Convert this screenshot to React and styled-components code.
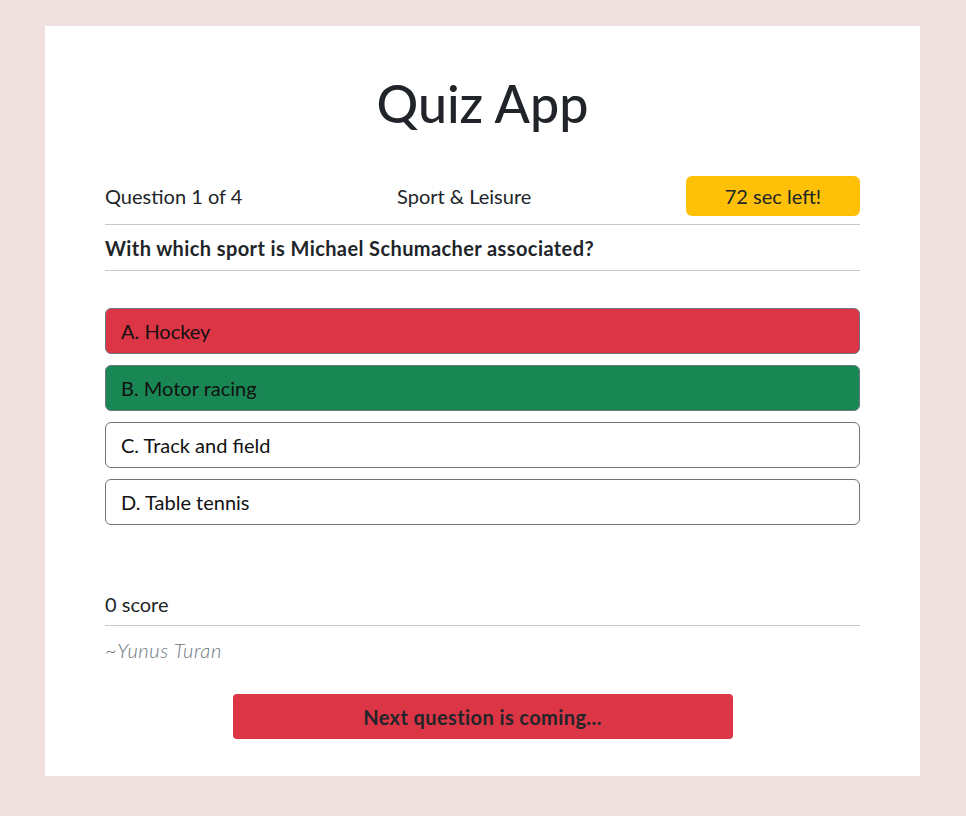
import React from 'react';
import styled, { createGlobalStyle } from 'styled-components';

const GlobalStyle = createGlobalStyle`
  body {
    margin: 0;
    background: #f1e0e0;
    font-family: 'Lato', 'Noto Sans', Arial, sans-serif;
    color: #212529;
  }
`;

const Page = styled.div`
  min-height: 100vh;
  padding: 26px 46px 40px 45px;
  box-sizing: border-box;
`;

const Card = styled.div`
  background: #fff;
  width: 875px;
  min-height: 750px;
  box-sizing: border-box;
  padding: 0 60px 37px 60px;
  display: flex;
  flex-direction: column;
`;

const Title = styled.h1`
  margin: 46px 0 42px 0;
  text-align: center;
  font-size: 52px;
  font-weight: 500;
  line-height: 1.2;
  color: #212529;
`;

const InfoRow = styled.div`
  display: flex;
  justify-content: space-between;
  align-items: center;
  font-size: 20px;
  font-weight: 400;
  color: #212529;
`;

const Timer = styled.div`
  width: 174px;
  height: 40px;
  border-radius: 6px;
  background: #ffc107;
  display: flex;
  align-items: center;
  justify-content: center;
`;

const Rule = styled.hr`
  border: none;
  border-top: 1px solid #c8c8c8;
  margin: ${p => p.$mt || 0}px 0 ${p => p.$mb || 0}px 0;
`;

const Question = styled.div`
  font-size: 20px;
  font-weight: 700;
  letter-spacing: 0.4px;
  line-height: 1.2;
  padding: 11px 0 10px 0;
`;

const Options = styled.div`
  display: flex;
  flex-direction: column;
  gap: 11px;
  margin-top: 37px;
`;

const colors = {
  wrong: '#dc3545',
  right: '#198754',
  idle: '#fff',
};

const Option = styled.button`
  display: block;
  width: 100%;
  height: 46px;
  text-align: left;
  padding: 0 15px;
  font-family: inherit;
  font-size: 20px;
  font-weight: 400;
  color: #111;
  background: ${p => colors[p.$state]};
  border: 1px solid #6c757d;
  border-radius: 6px;
  cursor: pointer;
`;

const Score = styled.div`
  margin-top: 65px;
  font-size: 20px;
  font-weight: 400;
  line-height: 1.4;
  padding-bottom: 7px;
`;

const Author = styled.div`
  margin-top: 12px;
  font-size: 20px;
  font-style: italic;
  font-weight: 300;
  letter-spacing: 0.6px;
  color: #6c757d;
`;

const NextButton = styled.button`
  align-self: center;
  margin-top: 32px;
  width: 500px;
  height: 45px;
  border: none;
  border-radius: 4px;
  background: #dc3545;
  color: #212529;
  font-family: inherit;
  font-size: 20px;
  font-weight: 700;
  letter-spacing: 0.4px;
`;

const answers = [
  { label: 'A. Hockey', state: 'wrong' },
  { label: 'B. Motor racing', state: 'right' },
  { label: 'C. Track and field', state: 'idle' },
  { label: 'D. Table tennis', state: 'idle' },
];

export default function App() {
  return (
    <>
      <GlobalStyle />
      <Page>
        <Card>
          <Title>Quiz App</Title>
          <InfoRow>
            <div>Question 1 of 4</div>
            <div>Sport &amp; Leisure</div>
            <Timer>72 sec left!</Timer>
          </InfoRow>
          <Rule $mt={8} />
          <Question>With which sport is Michael Schumacher associated?</Question>
          <Rule />
          <Options>
            {answers.map(a => (
              <Option key={a.label} $state={a.state}>{a.label}</Option>
            ))}
          </Options>
          <Score>0 score</Score>
          <Rule />
          <Author>~Yunus Turan</Author>
          <NextButton>Next question is coming...</NextButton>
        </Card>
      </Page>
    </>
  );
}
